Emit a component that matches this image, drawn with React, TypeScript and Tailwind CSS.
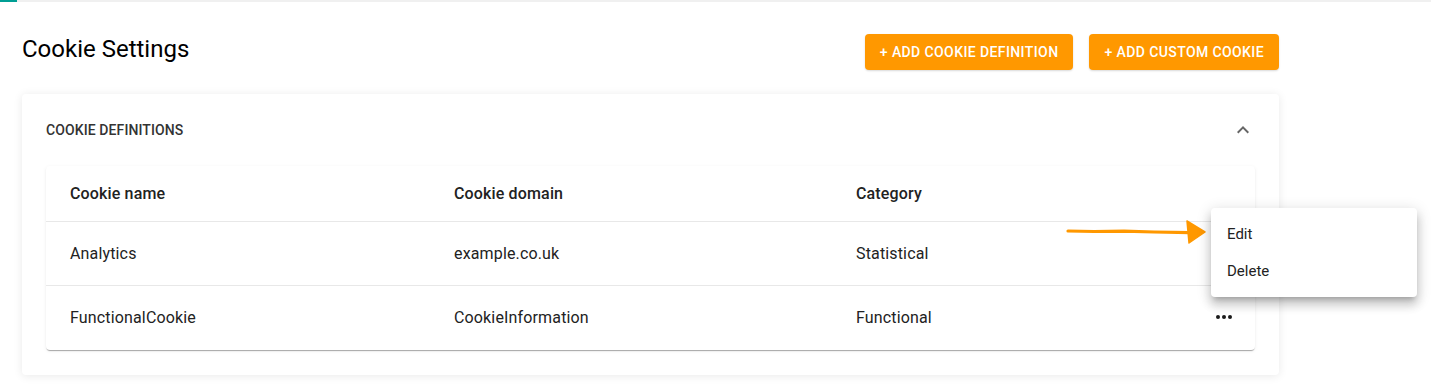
import { useState } from "react";

type Row = { name: string; domain: string; category: string };

const rows: Row[] = [
  { name: "Analytics", domain: "example.co.uk", category: "Statistical" },
  { name: "FunctionalCookie", domain: "CookieInformation", category: "Functional" },
];

const MoreIcon = () => (
  <svg width="24" height="24" viewBox="0 0 24 24" className="fill-[#1a1a1a]">
    <circle cx="6" cy="12" r="2" />
    <circle cx="12" cy="12" r="2" />
    <circle cx="18" cy="12" r="2" />
  </svg>
);

const App = () => {
  const [open] = useState(true);

  return (
    <div className="relative w-[1431px] h-[385px] overflow-hidden bg-white font-['Roboto',sans-serif] text-[#212121]">
      {/* top progress line */}
      <div className="h-[2px] bg-[#f0f0f0]">
        <div className="h-[2px] w-[17px] bg-[#009e94]" />
      </div>

      <div className="w-[1279px] pl-[22px]">
        <div className="flex justify-between items-start mt-[32px]">
          <h1 className="text-[24px] leading-8 -mt-[1px] text-black">Cookie Settings</h1>
          <div className="flex gap-4">
            <button className="h-9 px-[15px] rounded bg-[#ff9800] text-white text-[14px] font-medium tracking-[0.4px] uppercase shadow-[0_1px_2px_rgba(0,0,0,0.15)]">
              + Add cookie definition
            </button>
            <button className="h-9 px-[15px] rounded bg-[#ff9800] text-white text-[14px] font-medium tracking-[0.4px] uppercase shadow-[0_1px_2px_rgba(0,0,0,0.15)]">
              + Add custom cookie
            </button>
          </div>
        </div>

        <section className="mt-6 rounded bg-white shadow-[0_1px_10px_rgba(0,0,0,0.09)] px-6 pb-[25px]">
          <div className="h-[72px] flex items-center justify-between">
            <h2 className="text-[14px] font-medium text-[#333] uppercase tracking-[0.1px]">Cookie definitions</h2>
            <svg width="24" height="24" viewBox="0 0 24 24" className="fill-[#666]">
              <path d="M12 8l-6 6 1.41 1.41L12 10.83l4.59 4.58L18 14z" />
            </svg>
          </div>

          <div className="rounded bg-white shadow-[0_2px_1px_-1px_rgba(0,0,0,0.25),0_1px_1px_0_rgba(0,0,0,0.1),0_1px_4px_0_rgba(0,0,0,0.06)]">
            <div className="grid grid-cols-[384px_402px_1fr_80px] h-14 items-center text-[16px] font-medium tracking-[0.15px] text-[#222] border-b border-[#e8e8e8]">
              <div className="pl-6">Cookie name</div>
              <div className="pl-6">Cookie domain</div>
              <div className="pl-6">Category</div>
              <div />
            </div>
            {rows.map((r, i) => (
              <div
                key={r.name}
                className={`grid grid-cols-[384px_402px_1fr_80px] h-16 items-center text-[16px] tracking-[0.15px] text-[#222] ${
                  i < rows.length - 1 ? "border-b border-[#e8e8e8]" : ""
                }`}
              >
                <div className="pl-6">{r.name}</div>
                <div className="pl-6">{r.domain}</div>
                <div className="pl-6">{r.category}</div>
                <div className="flex justify-end pr-[19px] -mt-[2px]">
                  <MoreIcon />
                </div>
              </div>
            ))}
          </div>
        </section>
      </div>

      {/* annotation arrow */}
      <svg
        width="146"
        height="28"
        viewBox="0 0 146 28"
        className="absolute left-[1064px] top-[218px]"
      >
        <path
          d="M4 13 L30 13.5 L60 13.2 L90 14 L126 14.6"
          stroke="#ff9800"
          strokeWidth="3.2"
          strokeLinecap="round"
          fill="none"
        />
        <path d="M123 3 L141 14 L125 25 Z" fill="#ff9800" stroke="#ff9800" strokeWidth="1.5" strokeLinejoin="round" />
      </svg>

      {open && (
        <div className="absolute left-[1211px] top-[208px] w-[206px] pt-2 pb-[9px] rounded bg-white shadow-[0_5px_5px_-3px_rgba(0,0,0,0.2),0_8px_10px_1px_rgba(0,0,0,0.14),0_3px_14px_2px_rgba(0,0,0,0.12)]">
          <div className="h-9 flex items-center px-4 text-[15px] text-[#222]">Edit</div>
          <div className="h-9 flex items-center px-4 pt-[2px] text-[15px] text-[#222]">Delete</div>
        </div>
      )}
    </div>
  );
};

export default App;
